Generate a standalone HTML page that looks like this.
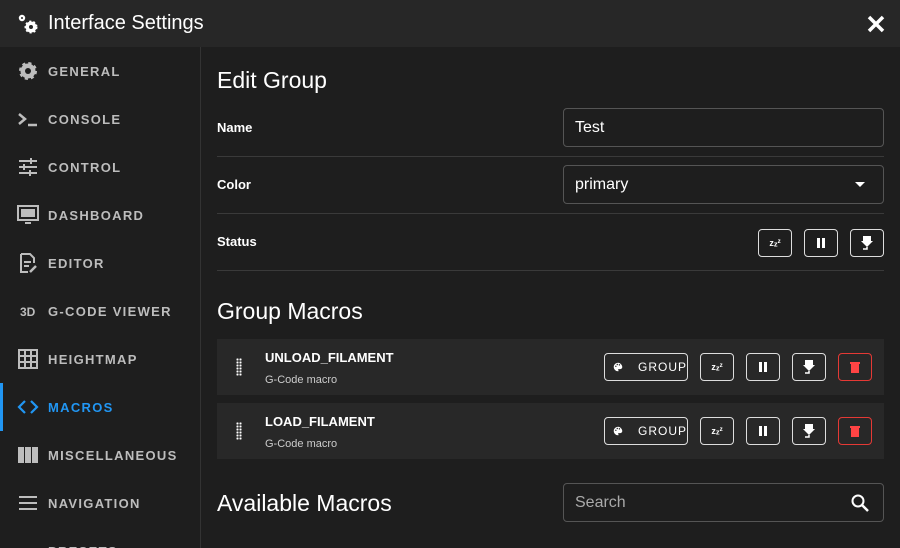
<!DOCTYPE html>
<html><head><meta charset="utf-8"><style>
*{box-sizing:border-box;margin:0;padding:0}
html,body{width:900px;height:548px;overflow:hidden}
body{background:#1e1e1e;font-family:"Liberation Sans",sans-serif;color:#fff;position:relative}
.hdr{position:absolute;left:0;top:0;width:900px;height:47px;background:#272727}
.hdr .t{position:absolute;left:48px;top:12px;font-size:20px}
.side{position:absolute;left:0;top:47px;width:201px;height:501px;border-right:1px solid #333;background:#1e1e1e;overflow:hidden}
.it{position:absolute;left:0;height:48px;width:200px}
.it span{position:absolute;left:48px;top:17px;font-size:13px;font-weight:bold;letter-spacing:1.3px;color:#bdbdbd}
.it svg{position:absolute;left:17px;top:13px}
.act span{color:#2196f3}
.act:before{content:"";position:absolute;left:0;top:0;width:3px;height:48px;background:#2196f3}
.a{position:absolute}
.lbl{font-size:13px;font-weight:bold}
.inp{position:absolute;border:1px solid #555;border-radius:4px;font-size:16px;padding:0 11px;line-height:37px}
.hr{position:absolute;left:217px;width:667px;height:1px;background:#3a3a3a}
.b{position:absolute;border:1px solid #ddd;border-radius:4px;height:28px;display:flex;align-items:center;justify-content:center}
.row{position:absolute;left:217px;width:667px;height:56px;background:#282828}
.h2{font-size:23px}
.z{font-size:9px;font-weight:bold}
</style></head><body>
<div class="hdr">
<svg class="a" style="left:17px;top:13px" width="24" height="22" viewBox="0 0 24 22"><circle cx="5" cy="5" r="3.2" fill="#fff"/><circle cx="5" cy="5" r="1" fill="#272727"/><circle cx="14" cy="14" r="5.5" fill="#fff" stroke="#fff" stroke-width="2" stroke-dasharray="2 2"/><circle cx="14" cy="14" r="2" fill="#272727"/></svg>
<div class="t">Interface Settings</div>
<svg class="a" style="left:867px;top:15px" width="18" height="18" viewBox="0 0 18 18"><path d="M2 2l14 14M16 2L2 16" stroke="#fff" stroke-width="3.5"/></svg>
</div>
<div class="side">
<div class="it" style="top:0"><svg width="22" height="22" viewBox="0 0 22 22"><circle cx="11" cy="11" r="7.5" fill="#bdbdbd" stroke="#bdbdbd" stroke-width="3" stroke-dasharray="3 2.9"/><circle cx="11" cy="11" r="3" fill="#1e1e1e"/></svg><span>GENERAL</span></div>
<div class="it" style="top:48px"><svg width="22" height="22" viewBox="0 0 22 22"><path d="M2 6l6 5-6 5M11 17h9" stroke="#bdbdbd" stroke-width="2.5" fill="none"/></svg><span>CONSOLE</span></div>
<div class="it" style="top:96px"><svg width="22" height="22" viewBox="0 0 22 22"><path d="M2 5h18M2 11h18M2 17h18M14 2v6M7 8v6M13 14v6" stroke="#bdbdbd" stroke-width="2" fill="none"/></svg><span>CONTROL</span></div>
<div class="it" style="top:144px"><svg width="22" height="22" viewBox="0 0 22 22"><rect x="1" y="2" width="20" height="14" fill="none" stroke="#bdbdbd" stroke-width="2"/><rect x="4" y="5" width="14" height="8" fill="#bdbdbd"/><path d="M8 19h6" stroke="#bdbdbd" stroke-width="2"/></svg><span>DASHBOARD</span></div>
<div class="it" style="top:192px"><svg width="22" height="22" viewBox="0 0 22 22"><path d="M4 2h9l4 4v5M4 2v18h7M7 10h7M7 14h5" stroke="#bdbdbd" stroke-width="2" fill="none"/><path d="M13 20l6-6" stroke="#bdbdbd" stroke-width="2.5"/></svg><span>EDITOR</span></div>
<div class="it" style="top:240px"><span style="left:20px;font-size:12px;top:18px;letter-spacing:0">3D</span><span>G-CODE VIEWER</span></div>
<div class="it" style="top:288px"><svg width="22" height="22" viewBox="0 0 22 22"><rect x="2" y="2" width="18" height="18" fill="none" stroke="#bdbdbd" stroke-width="2"/><path d="M8 2v18M14 2v18M2 8h18M2 14h18" stroke="#bdbdbd" stroke-width="2"/></svg><span>HEIGHTMAP</span></div>
<div class="it act" style="top:336px"><svg width="22" height="22" viewBox="0 0 22 22"><path d="M8 5l-6 6 6 6M14 5l6 6-6 6" stroke="#2196f3" stroke-width="2.2" fill="none"/></svg><span>MACROS</span></div>
<div class="it" style="top:384px"><svg width="22" height="22" viewBox="0 0 22 22"><rect x="1" y="3" width="6" height="16" fill="#bdbdbd"/><rect x="8" y="3" width="6" height="16" fill="#bdbdbd"/><rect x="15" y="3" width="6" height="16" fill="#bdbdbd"/></svg><span>MISCELLANEOUS</span></div>
<div class="it" style="top:432px"><svg width="22" height="22" viewBox="0 0 22 22"><path d="M2 5h18M2 11h18M2 17h18" stroke="#bdbdbd" stroke-width="2"/></svg><span>NAVIGATION</span></div>
<div class="it" style="top:480px"><span>PRESETS</span></div>
</div>
<div class="a h2" style="left:217px;top:67px">Edit Group</div>
<div class="a lbl" style="left:217px;top:120px">Name</div>
<div class="inp" style="left:563px;top:108px;width:321px;height:39px">Test</div>
<div class="hr" style="top:156px"></div>
<div class="a lbl" style="left:217px;top:177px">Color</div>
<div class="inp" style="left:563px;top:165px;width:321px;height:39px">primary<svg style="position:absolute;right:18px;top:16px" width="10" height="5"><path d="M0 0h10L5 5z" fill="#fff"/></svg></div>
<div class="hr" style="top:213px"></div>
<div class="a lbl" style="left:217px;top:234px">Status</div>

<div class="b z" style="left:758px;top:229px;width:34px">z<sup>z<sup>z</sup></sup></div>
<div class="b" style="left:804px;top:229px;width:34px"><svg width="10" height="10"><rect x="1" width="3" height="10" fill="#fff"/><rect x="6" width="3" height="10" fill="#fff"/></svg></div>
<div class="b" style="left:850px;top:229px;width:34px"><svg width="14" height="16" viewBox="0 0 14 16"><path d="M3 1h8v5h2l-6 6-6-6h2z" fill="#fff"/><path d="M7 12v2H3" stroke="#fff" stroke-width="1.5" fill="none"/></svg></div>
<div class="hr" style="top:270px"></div>
<div class="a h2" style="left:217px;top:298px">Group Macros</div>

<div class="row" style="top:339px"></div>
<div class="row" style="top:403px"></div>
<div class="a" style="left:236px;top:358px;width:6px;height:18px;background:radial-gradient(circle,#fff 1px,transparent 1.2px) 0 0/3px 3px"></div>
<div class="a" style="left:236px;top:422px;width:6px;height:18px;background:radial-gradient(circle,#fff 1px,transparent 1.2px) 0 0/3px 3px"></div>
<div class="a lbl" style="left:265px;top:350px">UNLOAD_FILAMENT</div>
<div class="a" style="left:265px;top:374px;font-size:11px;color:#ccc">G-Code macro</div>
<div class="a lbl" style="left:265px;top:414px">LOAD_FILAMENT</div>
<div class="a" style="left:265px;top:438px;font-size:11px;color:#ccc">G-Code macro</div>

<div class="b" style="left:604px;top:353px;width:84px;font-size:12px;letter-spacing:1px;justify-content:flex-start;padding-left:8px"><svg width="14" height="14" viewBox="0 0 14 14"><path d="M7 1a6 6 0 000 12c1 0 1-1 .5-1.5S7 10 8 10h2a3 3 0 003-3c0-3-3-6-6-6z" fill="#fff"/><circle cx="4" cy="6" r="1" fill="#282828"/><circle cx="6" cy="3.5" r="1" fill="#282828"/><circle cx="9" cy="4" r="1" fill="#282828"/></svg><span style="margin-left:15px">GROUP</span></div>
<div class="b z" style="left:700px;top:353px;width:34px">z<sup>z<sup>z</sup></sup></div>
<div class="b" style="left:746px;top:353px;width:34px"><svg width="10" height="10"><rect x="1" width="3" height="10" fill="#fff"/><rect x="6" width="3" height="10" fill="#fff"/></svg></div>
<div class="b" style="left:792px;top:353px;width:34px"><svg width="14" height="16" viewBox="0 0 14 16"><path d="M3 1h8v5h2l-6 6-6-6h2z" fill="#fff"/><path d="M7 12v2H3" stroke="#fff" stroke-width="1.5" fill="none"/></svg></div>
<div class="b" style="left:838px;top:353px;width:34px;border-color:#e53935"><svg width="10" height="12"><rect x="0" y="1" width="10" height="2" fill="#f44"/><rect x="1" y="3" width="8" height="9" fill="#f44"/></svg></div>

<div class="b" style="left:604px;top:417px;width:84px;font-size:12px;letter-spacing:1px;justify-content:flex-start;padding-left:8px"><svg width="14" height="14" viewBox="0 0 14 14"><path d="M7 1a6 6 0 000 12c1 0 1-1 .5-1.5S7 10 8 10h2a3 3 0 003-3c0-3-3-6-6-6z" fill="#fff"/><circle cx="4" cy="6" r="1" fill="#282828"/><circle cx="6" cy="3.5" r="1" fill="#282828"/><circle cx="9" cy="4" r="1" fill="#282828"/></svg><span style="margin-left:15px">GROUP</span></div>
<div class="b z" style="left:700px;top:417px;width:34px">z<sup>z<sup>z</sup></sup></div>
<div class="b" style="left:746px;top:417px;width:34px"><svg width="10" height="10"><rect x="1" width="3" height="10" fill="#fff"/><rect x="6" width="3" height="10" fill="#fff"/></svg></div>
<div class="b" style="left:792px;top:417px;width:34px"><svg width="14" height="16" viewBox="0 0 14 16"><path d="M3 1h8v5h2l-6 6-6-6h2z" fill="#fff"/><path d="M7 12v2H3" stroke="#fff" stroke-width="1.5" fill="none"/></svg></div>
<div class="b" style="left:838px;top:417px;width:34px;border-color:#e53935"><svg width="10" height="12"><rect x="0" y="1" width="10" height="2" fill="#f44"/><rect x="1" y="3" width="8" height="9" fill="#f44"/></svg></div>

<div class="a h2" style="left:217px;top:490px">Available Macros</div>
<div class="inp" style="left:563px;top:483px;width:321px;height:39px;color:#aaa">Search
<svg style="position:absolute;right:14px;top:10px" width="18" height="18" viewBox="0 0 18 18"><circle cx="7" cy="7" r="5.5" stroke="#fff" stroke-width="2" fill="none"/><path d="M11 11l6 6" stroke="#fff" stroke-width="2.5"/></svg></div>
</body></html>
